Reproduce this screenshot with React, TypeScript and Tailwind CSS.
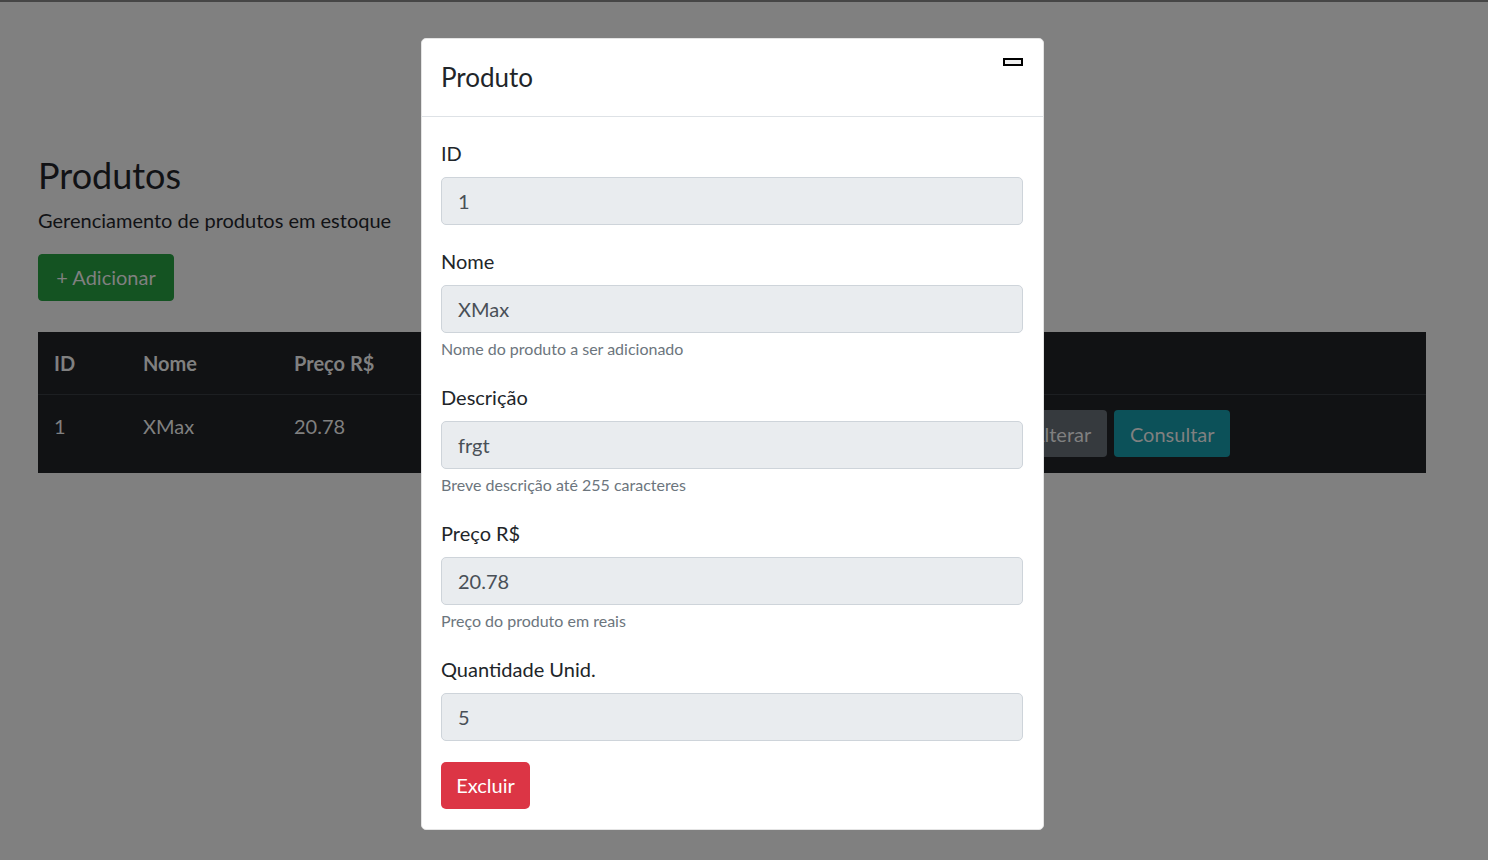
import React from "react";

const FONT = { fontFamily: "Lato, 'Noto Sans', sans-serif" };

type Field = { label: string; value: string; help?: string };

const FIELDS: Field[] = [
  { label: "ID", value: "1" },
  { label: "Nome", value: "XMax", help: "Nome do produto a ser adicionado" },
  { label: "Descrição", value: "frgt", help: "Breve descrição até 255 caracteres" },
  { label: "Preço R$", value: "20.78", help: "Preço do produto em reais" },
  { label: "Quantidade Unid.", value: "5" },
];

function FormGroup({ field }: { field: Field }) {
  return (
    <div className="mb-[21px]">
      <label className="block h-[30px] text-[20px] leading-[30px] text-[#212529] mb-[9px]">
        {field.label}
      </label>
      <div className="h-[48px] rounded-[5px] border border-[#ced4da] bg-[#e9ecef] px-4 text-[20px] leading-[46px] text-[#495057]">
        {field.value}
      </div>
      {field.help && (
        <div className="mt-[4px] h-[24px] text-[16px] leading-[24px] text-[#6c757d]">{field.help}</div>
      )}
    </div>
  );
}

export default function App() {
  return (
    <div className="relative h-[860px] w-[1488px] overflow-hidden bg-[#808080]" style={FONT}>
      <div className="h-[2px] bg-[#464646]" />

      {/* page behind the backdrop (colours already dimmed) */}
      <div className="pl-[38px] pt-[149px]">
        <h1 className="h-[48px] text-[36px] leading-[48px] text-[#111215]">Produtos</h1>
        <p className="mt-[6px] h-[30px] text-[20px] leading-[30px] text-[#111215]">
          Gerenciamento de produtos em estoque
        </p>
        <button className="mt-[19px] h-[47px] w-[136px] rounded-[4px] border border-[#145322] bg-[#145322] text-[20px] leading-[45px] text-[#808080]">
          + Adicionar
        </button>

        <div className="mt-[31px] w-[1388px] bg-[#111214] text-[20px] text-[#808080]">
          <div className="flex h-[63px] border-b border-[#1d1f22] font-bold leading-[30px]">
            <div className="w-[89px] px-4 py-4">ID</div>
            <div className="w-[151px] px-4 py-4">Nome</div>
            <div className="w-[339px] px-4 py-4">Preço R$</div>
            <div className="w-[382px]" />
            <div className="flex-1" />
          </div>
          <div className="flex h-[78px] leading-[30px]">
            <div className="w-[89px] px-4 py-4">1</div>
            <div className="w-[151px] px-4 py-4">XMax</div>
            <div className="w-[339px] px-4 py-4">20.78</div>
            <div className="w-[382px]" />
            <div className="flex flex-1 gap-[7px] px-4 py-[15px]">
              <button className="h-[47px] rounded-[4px] bg-[#363a3e] px-4 text-[20px] text-[#808080]">
                Alterar
              </button>
              <button className="h-[47px] w-[116px] rounded-[4px] bg-[#0c5159] text-[20px] text-[#808080]">
                Consultar
              </button>
            </div>
          </div>
        </div>
      </div>

      {/* modal */}
      <div className="absolute left-[421px] top-[38px] w-[623px] rounded-[5px] border border-[#e4e4e4] bg-white">
        <div className="flex h-[78px] items-start justify-between border-b border-[#dee2e6] pl-[19px] pr-[20px]">
          <h4 className="mt-[22px] text-[26px] leading-[32px] text-[#212529]">Produto</h4>
          <button className="mt-[19px] h-[8px] w-[20px] border-2 border-black bg-[#efefef]" />
        </div>
        <div className="pl-[19px] pr-[20px] pt-[21px] pb-[20px]">
          {FIELDS.map((f) => (
            <FormGroup key={f.label} field={f} />
          ))}
          <button className="h-[47px] w-[89px] rounded-[5px] bg-[#dc3545] text-[20px] leading-[47px] text-white">
            Excluir
          </button>
        </div>
      </div>
    </div>
  );
}
